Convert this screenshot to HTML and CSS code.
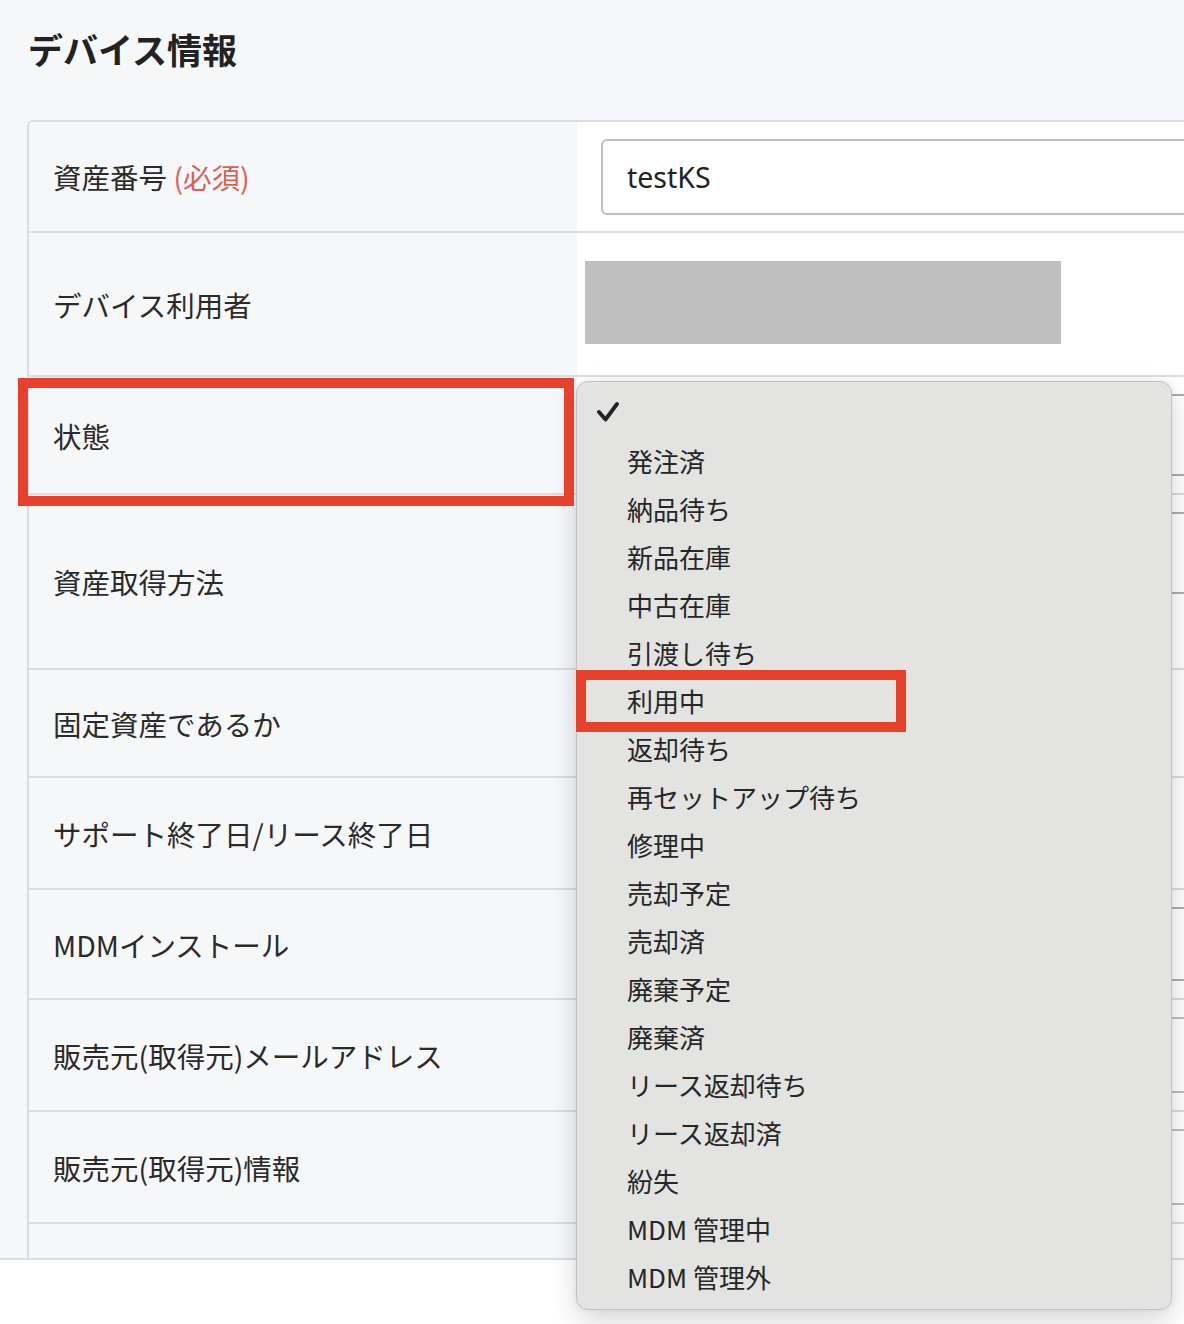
FILE: index.html
```html
<!DOCTYPE html>
<html lang="ja">
<head>
    <meta charset="UTF-8">
    <meta name="viewport" content="width=device-width, initial-scale=1.0">
    <title>デバイス情報</title>
    <link rel="stylesheet" href="styles.css">
</head>
<body>

    <div class="page">
        <div class="sheet">
            <h2 class="title">デバイス情報</h2>

            <!-- Device form -->
            <div class="card">
                <div class="row row-asset">
                    <div class="label">資産番号 <span class="required">(必須)</span></div>
                    <div class="value"><input class="field" type="text" value="testKS"></div>
                </div>
                <div class="row row-user">
                    <div class="label">デバイス利用者</div>
                    <div class="value value-masked"><div class="masked"></div></div>
                </div>
                <div class="row row-status">
                    <div class="label">状態</div>
                    <div class="value"><div class="field field-select"></div></div>
                </div>
                <div class="row row-method">
                    <div class="label">資産取得方法</div>
                    <div class="value value-top"><div class="field field-select"></div></div>
                </div>
                <div class="row row-fixed">
                    <div class="label">固定資産であるか</div>
                    <div class="value"></div>
                </div>
                <div class="row row-support">
                    <div class="label">サポート終了日/リース終了日</div>
                    <div class="value"></div>
                </div>
                <div class="row row-mdm">
                    <div class="label">MDMインストール</div>
                    <div class="value"><div class="field field-select field-short"></div></div>
                </div>
                <div class="row row-mail">
                    <div class="label">販売元(取得元)メールアドレス</div>
                    <div class="value"><input class="field" type="text" value=""></div>
                </div>
                <div class="row row-info">
                    <div class="label">販売元(取得元)情報</div>
                    <div class="value"><input class="field" type="text" value=""></div>
                </div>
                <div class="row row-more">
                    <div class="label"></div>
                    <div class="value"></div>
                </div>
            </div>
        </div>

        <!-- Status select, opened -->
        <ul class="dropdown">
            <li class="selected">
                <span class="tick">
                    <svg width="22" height="22" viewBox="0 0 22 22"><path d="M2 11 L8.5 18.5 L20 3" fill="none" stroke="#222" stroke-width="3.8" stroke-linecap="round" stroke-linejoin="round"/></svg>
                </span>
            </li>
            <li><span class="tick"></span>発注済</li>
            <li><span class="tick"></span>納品待ち</li>
            <li><span class="tick"></span>新品在庫</li>
            <li><span class="tick"></span>中古在庫</li>
            <li><span class="tick"></span>引渡し待ち</li>
            <li><span class="tick"></span>利用中</li>
            <li><span class="tick"></span>返却待ち</li>
            <li><span class="tick"></span>再セットアップ待ち</li>
            <li><span class="tick"></span>修理中</li>
            <li><span class="tick"></span>売却予定</li>
            <li><span class="tick"></span>売却済</li>
            <li><span class="tick"></span>廃棄予定</li>
            <li><span class="tick"></span>廃棄済</li>
            <li><span class="tick"></span>リース返却待ち</li>
            <li><span class="tick"></span>リース返却済</li>
            <li><span class="tick"></span>紛失</li>
            <li><span class="tick"></span>MDM 管理中</li>
            <li><span class="tick"></span>MDM 管理外</li>
        </ul>

        <!-- Annotation marks -->
        <div class="mark mark-status"></div>
        <div class="mark mark-inuse"></div>
    </div>

</body>
</html>
```

FILE: styles.css
```css
html, body {
    overflow: hidden;
}
body {
    margin: 0;
    padding: 0;
    background-color: #fff;
    font-family: "Noto Sans CJK JP", "Noto Sans", sans-serif;
    color: #2a2a2a;
}
.page {
    position: relative;
    height: 1324px;
}
.sheet {
    height: 1258px;
    background-color: #f6f7f9;
    border-bottom: 2px solid #d9dee5;
    overflow: hidden;
}
.title {
    margin: 0;
    padding: 25px 0 0 28px;
    font-size: 35px;
    line-height: 48px;
    font-weight: 700;
    color: #222;
}
.card {
    margin: 47px 0 0 27px;
    width: 1300px;
    border-top: 2px solid #d9dee5;
    border-left: 2px solid #d9dee5;
    border-top-left-radius: 6px;
    overflow: hidden;
}
.row {
    display: flex;
    box-sizing: border-box;
    border-bottom: 2px solid #d9dee5;
}
.row-asset { height: 111px; }
.row-user { height: 144px; }
.row-status { height: 118px; }
.row-method { height: 175px; }
.row-fixed { height: 108px; }
.row-support { height: 112px; }
.row-mdm { height: 110px; }
.row-mail { height: 112px; }
.row-info { height: 112px; }
.row-more {
    height: 60px;
    border-bottom: none;
}
.label {
    flex: 0 0 548px;
    box-sizing: border-box;
    display: flex;
    align-items: center;
    padding-left: 24px;
    font-size: 28.5px;
    background-color: #f6f7f9;
    white-space: pre;
}
.required {
    color: #dd5e57;
}
.value {
    flex: 1;
    display: flex;
    align-items: center;
    box-sizing: border-box;
    padding: 0 24px;
    background-color: #fff;
}
.value-top {
    align-items: flex-start;
    padding-top: 17px;
}
.value-masked {
    padding-left: 8px;
}
.masked {
    width: 476px;
    height: 83px;
    margin-top: -4px;
    background-color: #bfbfbf;
}
.field {
    box-sizing: border-box;
    width: 100%;
    height: 76px;
    padding: 0 24px;
    border: 2px solid #b9bdc7;
    border-radius: 6px;
    background: #fff;
    font-family: "Noto Sans", "Noto Sans CJK JP", sans-serif;
    font-size: 28.5px;
    color: #222;
    outline: none;
}
.field-select {
    height: 82px;
    border-color: #a9adb8;
}
.field-short {
    height: 74px;
}
.dropdown {
    position: absolute;
    left: 576px;
    top: 381px;
    width: 596px;
    height: 929px;
    box-sizing: border-box;
    margin: 0;
    padding: 6px 0 10px;
    list-style: none;
    background-color: #e3e3e1;
    border: 1px solid #c3c3c3;
    border-radius: 12px;
    box-shadow: 0 10px 28px rgba(0, 0, 0, 0.16), 0 0 6px rgba(0, 0, 0, 0.06);
    z-index: 2;
}
.dropdown li {
    display: flex;
    align-items: center;
    height: 48px;
    padding-left: 20px;
    font-size: 26px;
    color: #262626;
}
.tick {
    flex: 0 0 30px;
    display: flex;
    align-items: center;
}
.mark {
    position: absolute;
    box-sizing: border-box;
    border: 10px solid #e8412b;
    z-index: 3;
}
.mark-status {
    left: 18px;
    top: 378px;
    width: 556px;
    height: 128px;
}
.mark-inuse {
    left: 576px;
    top: 670px;
    width: 330px;
    height: 62px;
}
```
